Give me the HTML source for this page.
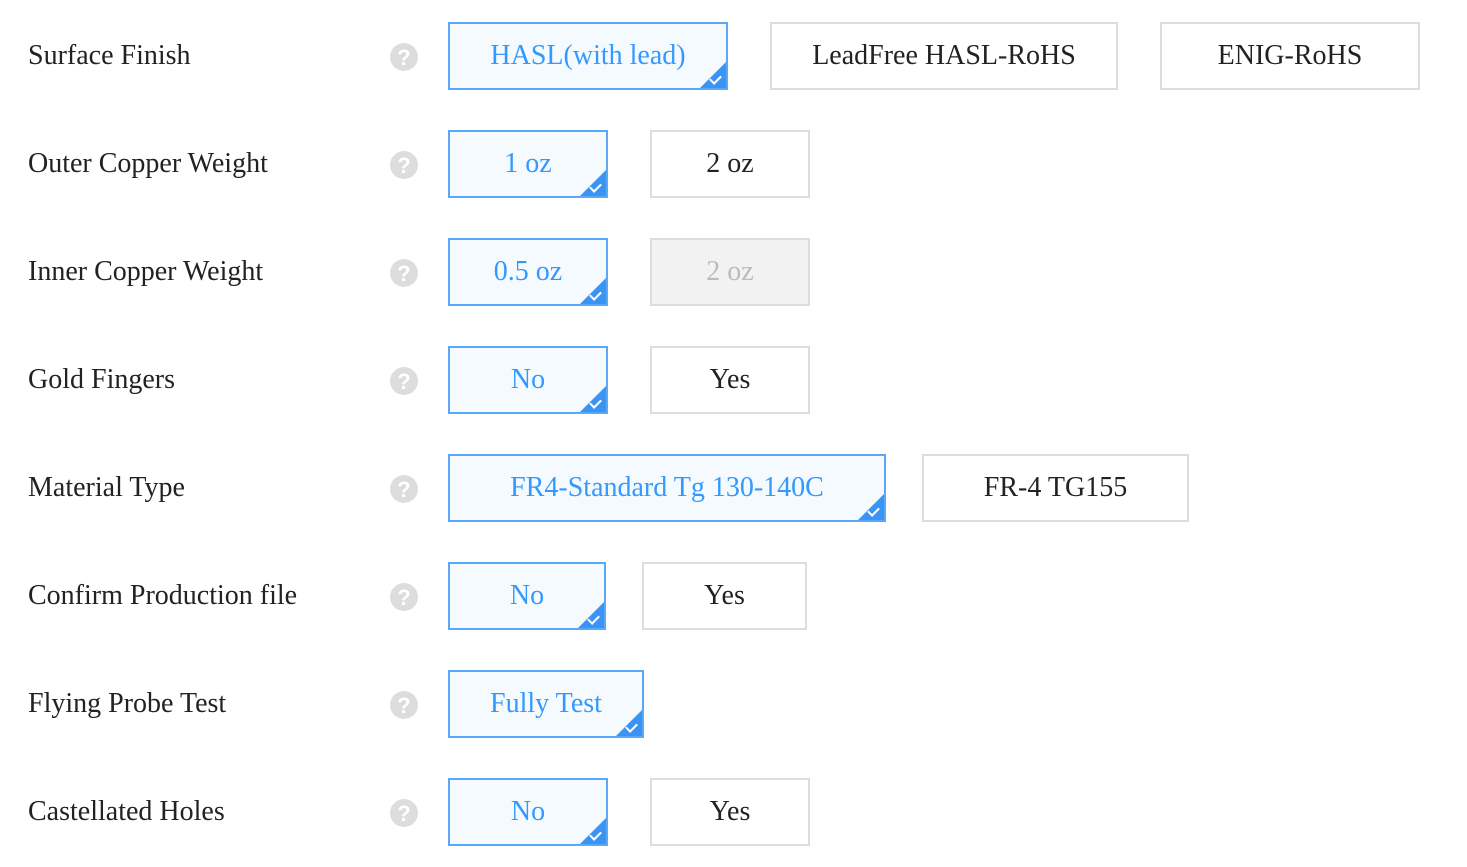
<!DOCTYPE html><html><head><style>
body{margin:0;background:#fff;width:1467px;height:867px;position:relative;font-family:"Liberation Serif",serif;overflow:hidden}
.l{position:absolute;left:28px;font-size:28px;color:#222;line-height:68px}
.q{position:absolute;left:390px;width:28px;height:28px;border-radius:50%;background:#ddd;color:#fff;font:bold 22px/29px "Liberation Sans",sans-serif;text-align:center}
.b{position:absolute;box-sizing:border-box;height:68px;border:2px solid #ddd;background:#fff;color:#222;font-size:28px;line-height:64px;text-align:center}
.s{border-color:#5aa8f8;background:#f5faff;color:#3399ff;overflow:hidden}
.s:after{content:"";position:absolute;right:0;bottom:0;border-style:solid;border-width:0 0 26px 26px;border-color:transparent transparent #3a94f5 transparent}
.s:before{content:"";position:absolute;right:5px;bottom:6px;width:9px;height:5px;border-left:2px solid #fff;border-bottom:2px solid #fff;transform:rotate(-45deg);z-index:1}
.d{background:#f2f2f2;color:#bbb}
</style></head><body>
<div class="l" style="top:22px">Surface Finish</div><div class="q" style="top:43px">?</div>
<div class="b s" style="top:22px;left:448px;width:280px">HASL(with lead)</div>
<div class="b" style="top:22px;left:770px;width:348px">LeadFree HASL-RoHS</div>
<div class="b" style="top:22px;left:1160px;width:260px">ENIG-RoHS</div>

<div class="l" style="top:130px">Outer Copper Weight</div><div class="q" style="top:151px">?</div>
<div class="b s" style="top:130px;left:448px;width:160px">1 oz</div>
<div class="b" style="top:130px;left:650px;width:160px">2 oz</div>

<div class="l" style="top:238px">Inner Copper Weight</div><div class="q" style="top:259px">?</div>
<div class="b s" style="top:238px;left:448px;width:160px">0.5 oz</div>
<div class="b d" style="top:238px;left:650px;width:160px">2 oz</div>

<div class="l" style="top:346px">Gold Fingers</div><div class="q" style="top:367px">?</div>
<div class="b s" style="top:346px;left:448px;width:160px">No</div>
<div class="b" style="top:346px;left:650px;width:160px">Yes</div>

<div class="l" style="top:454px">Material Type</div><div class="q" style="top:475px">?</div>
<div class="b s" style="top:454px;left:448px;width:438px">FR4-Standard Tg 130-140C</div>
<div class="b" style="top:454px;left:922px;width:267px">FR-4 TG155</div>

<div class="l" style="top:562px">Confirm Production file</div><div class="q" style="top:583px">?</div>
<div class="b s" style="top:562px;left:448px;width:158px">No</div>
<div class="b" style="top:562px;left:642px;width:165px">Yes</div>

<div class="l" style="top:670px">Flying Probe Test</div><div class="q" style="top:691px">?</div>
<div class="b s" style="top:670px;left:448px;width:196px">Fully Test</div>

<div class="l" style="top:778px">Castellated Holes</div><div class="q" style="top:799px">?</div>
<div class="b s" style="top:778px;left:448px;width:160px">No</div>
<div class="b" style="top:778px;left:650px;width:160px">Yes</div>
</body></html>
